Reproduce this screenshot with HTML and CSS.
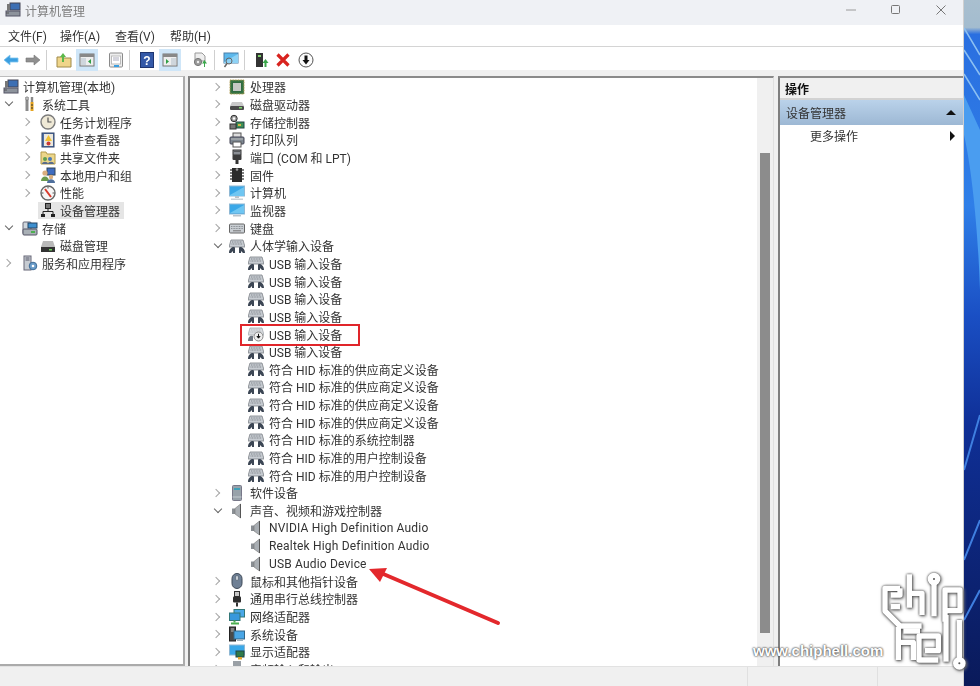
FILE: index.html
```html
<!DOCTYPE html>
<html lang="zh-CN">
<head>
  <meta charset="UTF-8">
  <title>计算机管理</title>
  <link rel="stylesheet" href="styles.css">
</head>
<body>
  <svg class="sprites" aria-hidden="true">
    <symbol id="i-root" viewBox="0 0 16 16"><rect x="5" y="1" width="10" height="7" fill="#3d6fb4" stroke="#445"/><rect x="1" y="9" width="14" height="5" fill="#8d939c" stroke="#556"/><path d="M3 4v5M1 11h3" stroke="#555"/><rect x="2" y="2" width="3" height="6" fill="#777"/></symbol>
    <symbol id="i-tools" viewBox="0 0 16 16"><path d="M5 1v14" stroke="#8a8a8a" stroke-width="3"/><path d="M4 1h2v3h-2z" fill="#ddd" stroke="#666" stroke-width=".6"/><path d="M10 1v5" stroke="#888" stroke-width="2.4"/><path d="M10 6v9" stroke="#e6a41e" stroke-width="3"/><path d="M9 9h2M9 12h2" stroke="#333"/></symbol>
    <symbol id="i-clock" viewBox="0 0 16 16"><circle cx="8" cy="8" r="7" fill="#efe9d6" stroke="#7c7c7c" stroke-width="1.4"/><path d="M8 3.5V8h3.5" fill="none" stroke="#555" stroke-width="1.2"/></symbol>
    <symbol id="i-event" viewBox="0 0 16 16"><rect x="2" y="1" width="12" height="14" fill="#4e6fa8" stroke="#33466a"/><rect x="4" y="2" width="9" height="12" fill="#ece8dc"/><path d="M8.5 3 12 9H5z" fill="#f1c232"/><circle cx="8.5" cy="11.5" r="2" fill="#c93a34"/></symbol>
    <symbol id="i-share" viewBox="0 0 16 16"><path d="M1 3h5l1 2h8v10H1z" fill="#ecd68a" stroke="#b39a4a"/><circle cx="5" cy="10" r="2" fill="#5f9d4e"/><circle cx="10" cy="10" r="2" fill="#4a78b8"/><path d="M2 15c0-3 6-3 6 0zM8 15c0-3 6-3 6 0z" fill="#596c8a"/></symbol>
    <symbol id="i-users" viewBox="0 0 16 16"><rect x="7" y="1" width="8" height="7" fill="#3f6cc0" stroke="#345"/><circle cx="5" cy="6" r="2.6" fill="#d9ae7e"/><path d="M1 14c0-6 8-6 8 0z" fill="#6b9a4d"/><circle cx="11" cy="10" r="2.2" fill="#d9ae7e"/><path d="M7 16c0-5 8-5 8 0z" fill="#4f6f9c"/></symbol>
    <symbol id="i-perf" viewBox="0 0 16 16"><circle cx="8" cy="8" r="7" fill="#f6f6f6" stroke="#666" stroke-width="1.4"/><path d="M5 4l6 8" stroke="#d83a2c" stroke-width="2"/><path d="M8 1.5v2M14.5 8h-2M1.5 8h2" stroke="#555"/></symbol>
    <symbol id="i-dev" viewBox="0 0 16 16"><rect x="5.5" y="1.5" width="5" height="5" fill="#777" stroke="#222"/><path d="M8 6.5v3M3 12V9.500h10V12" fill="none" stroke="#222"/><rect x="1" y="12" width="4" height="3" fill="#222"/><rect x="11" y="12" width="4" height="3" fill="#222"/></symbol>
    <symbol id="i-storage" viewBox="0 0 16 16"><rect x="1" y="2" width="8" height="12" rx="1" fill="#cfd6dc" stroke="#667"/><rect x="6" y="3" width="9" height="5" fill="#3d8fcf" stroke="#246"/><rect x="1" y="9" width="14" height="6" rx="1" fill="#a9b0b6" stroke="#556"/><rect x="9" y="11" width="4" height="2" fill="#4caf50"/></symbol>
    <symbol id="i-disk" viewBox="0 0 16 16"><path d="M3 3h10l2 6H1z" fill="#b9b9b9"/><rect x="1" y="9" width="14" height="5" fill="#333"/><rect x="9" y="11" width="3" height="1.500" fill="#6fcf5f"/></symbol>
    <symbol id="i-serv" viewBox="0 0 16 16"><rect x="2" y="1" width="7" height="14" fill="#c7ccd2" stroke="#667"/><path d="M3.500 3h4M3.500 5h4" stroke="#556"/><circle cx="11" cy="11" r="3.800" fill="#6a9cc9" stroke="#3d6b96"/><circle cx="11" cy="11" r="1.300" fill="#fff"/></symbol>
    <symbol id="i-cpu" viewBox="0 0 16 16"><rect x="1" y="1" width="14" height="14" fill="#3d7a4a" stroke="#b09a50" stroke-dasharray="1 .6"/><rect x="2.500" y="2.500" width="11" height="11" fill="#2f6a3f"/><rect x="4" y="4" width="8" height="8" fill="#c4c8c4"/></symbol>
    <symbol id="i-hdd" viewBox="0 0 16 16"><path d="M3 6h10l2 4H1z" fill="#c9c9c9"/><rect x="1" y="10" width="14" height="4" rx="1" fill="#4a4a4a"/><rect x="10" y="11" width="3" height="1.500" fill="#7ed36b"/></symbol>
    <symbol id="i-storctl" viewBox="0 0 16 16"><circle cx="5" cy="4.500" r="3.200" fill="#9a9a9a" stroke="#333"/><circle cx="5" cy="4.500" r="1.200" fill="#fff"/><rect x="7" y="8" width="8" height="6" fill="#3c8f56" stroke="#244"/><rect x="1" y="10" width="6" height="5" fill="#777" stroke="#333"/><rect x="9" y="10" width="3" height="2" fill="#d5b54a"/></symbol>
    <symbol id="i-print" viewBox="0 0 16 16"><rect x="4" y="1" width="8" height="5" fill="#ddd" stroke="#555"/><rect x="1" y="5" width="14" height="7" rx="1" fill="#7d8790" stroke="#445"/><rect x="4" y="10" width="8" height="5" fill="#fff" stroke="#555"/><path d="M2 7h12" stroke="#bbb"/></symbol>
    <symbol id="i-port" viewBox="0 0 16 16"><rect x="4" y="1" width="8" height="5" fill="#8b8f95" stroke="#333"/><path d="M5.500 2.500h1M7.500 2.500h1M9.500 2.500h1" stroke="#222"/><rect x="3.500" y="6" width="9" height="5" rx="1" fill="#3b3b3b"/><rect x="6.500" y="11" width="3" height="4" fill="#333"/></symbol>
    <symbol id="i-firm" viewBox="0 0 16 16"><rect x="3" y="1" width="10" height="14" fill="#2b2b2b"/><path d="M1 3h2M1 6h2M1 9h2M1 12h2M13 3h2M13 6h2M13 9h2M13 12h2" stroke="#555" stroke-width="1.400"/><circle cx="8" cy="2.500" r="1.300" fill="#999"/></symbol>
    <symbol id="i-pc" viewBox="0 0 16 16"><rect x="0.500" y="1" width="15" height="10" fill="#3aa8e8" stroke="#8fb8d4"/><path d="M1 10 15 2v9H1z" fill="#6fc6f2"/><path d="M6 11v2h4v-2" fill="#b9c3cb"/><rect x="2" y="13.500" width="12" height="1.500" fill="#c9d2d8"/></symbol>
    <symbol id="i-mon" viewBox="0 0 16 16"><rect x="0.500" y="2" width="15" height="10" fill="#3aa8e8" stroke="#8fb8d4"/><path d="M1 11 15 3v8H1z" fill="#6fc6f2"/><rect x="4" y="13" width="8" height="1.500" fill="#b9c3cb"/></symbol>
    <symbol id="i-kbd" viewBox="0 0 16 16"><rect x="0.500" y="4" width="15" height="9" rx="1" fill="#c9ced3" stroke="#666"/><path d="M2 6.500h12M2 8.500h12" stroke="#8a8f94" stroke-dasharray="1 .6"/><path d="M4 10.800h8" stroke="#777"/></symbol>
    <symbol id="i-hid" viewBox="0 0 16 16"><path d="M2 2h12l2 7H0z" fill="#c7ccd2" stroke="#7b8087" stroke-width=".8"/><path d="M3 4h10M2.500 6h11" stroke="#7f848a" stroke-dasharray="1 .6"/><path d="M0 15c0-6 6-7 6-5v5H4v-2l-2 2zM16 15c0-6-6-7-6-5v5h2v-2l2 2z" fill="#3c4654"/></symbol>
    <symbol id="i-hidoff" viewBox="0 0 16 16"><path d="M2 2h12l2 7H0z" fill="#d9dce0" stroke="#a5a9ae" stroke-width=".8"/><path d="M3 4h10M2.500 6h11" stroke="#b5b9bd" stroke-dasharray="1 .6"/><path d="M0 15c0-5 3-6 5-5v5H2z" fill="#6d7580"/><circle cx="10.500" cy="10.500" r="4.500" fill="#eee" stroke="#888"/><path d="M10.500 7.800v3.400M8.800 10l1.700 2.200 1.700-2.200" fill="#111" stroke="#111"/></symbol>
    <symbol id="i-soft" viewBox="0 0 16 16"><rect x="3.500" y="0.500" width="9" height="15" rx="1" fill="#98a2aa" stroke="#778"/><rect x="5" y="3" width="6" height="2" fill="#3fa0b8"/><path d="M3.500 12h9" stroke="#c4cbd0"/></symbol>
    <symbol id="i-spk" viewBox="0 0 16 16"><path d="M3 5.500h3V11H3z" fill="#8a8f94"/><path d="M6 5.500 11.500 1v14L6 11z" fill="#a9aeb3" stroke="#777" stroke-width=".6"/><path d="M11.500 1v14" stroke="#555"/></symbol>
    <symbol id="i-mouse" viewBox="0 0 16 16"><rect x="3" y="0.500" width="10" height="15" rx="5" fill="#6f8095" stroke="#3f4a58"/><rect x="6.500" y="2.500" width="3" height="5" rx="1.500" fill="#c7ced6" stroke="#3f4a58" stroke-width=".5"/></symbol>
    <symbol id="i-usb" viewBox="0 0 16 16"><rect x="5.500" y="0.500" width="5" height="5" fill="#c9c9c9" stroke="#333"/><rect x="4" y="5.500" width="8" height="6" rx="1" fill="#2f2f2f"/><path d="M8 11.500V15.500" stroke="#333" stroke-width="2"/></symbol>
    <symbol id="i-net" viewBox="0 0 16 16"><rect x="5" y="0.500" width="10.500" height="7.500" fill="#4aa8e8" stroke="#377"/><rect x="0.500" y="4" width="10.500" height="7.500" fill="#3898dc" stroke="#377"/><path d="M5.500 11.500v2" stroke="#4caf50" stroke-width="2"/><rect x="2" y="13.500" width="8" height="2" fill="#4caf50"/></symbol>
    <symbol id="i-sys" viewBox="0 0 16 16"><rect x="0.500" y="1" width="6" height="14" fill="#4a4a4a" stroke="#222"/><path d="M2 3h3M2 5h3" stroke="#bbb"/><rect x="5" y="5" width="10.500" height="8" fill="#49a6e6" stroke="#368"/><rect x="8" y="13.500" width="6" height="1.500" fill="#9fb0bb"/></symbol>
    <symbol id="i-disp" viewBox="0 0 16 16"><rect x="0.500" y="1" width="15" height="10" fill="#3aa8e8" stroke="#8fb8d4"/><rect x="7" y="7" width="8" height="6" fill="#2f7a4a" stroke="#244"/><rect x="9" y="13" width="4" height="2.500" fill="#e3a42a"/></symbol>
    <symbol id="i-aud" viewBox="0 0 16 16"><path d="M4 0h8v16H4z" fill="#9aa0a6"/></symbol>
  </svg>

  <div class="desktop">
    <div class="window">
      <div class="titlebar">
        <svg class="icon"><use href="#i-root"/></svg>
        <span class="title">计算机管理</span>
        <div class="winbtns">
          <svg class="winbtn" viewBox="0 0 10 10"><path d="M0 5h10" stroke="#9a9a9a"/></svg>
          <svg class="winbtn" viewBox="0 0 10 10"><rect x=".5" y=".5" width="8" height="8" rx="1" fill="none" stroke="#777"/></svg>
          <svg class="winbtn" viewBox="0 0 10 10"><path d="M.5.500l9 9M9.500.500l-9 9" stroke="#777"/></svg>
        </div>
      </div>

      <div class="menubar">
        <span class="m1">文件(F)</span>
        <span class="m2">操作(A)</span>
        <span class="m3">查看(V)</span>
        <span class="m4">帮助(H)</span>
      </div>

      <div class="toolbar">
        <svg class="tool" viewBox="0 0 16 16"><path d="M1 8l6-5v3h8v4H7v3z" fill="#3a9ee0" stroke="#7cc4ef" stroke-width=".8"/></svg>
        <svg class="tool" viewBox="0 0 16 16"><path d="M15 8 9 3v3H1v4h8v3z" fill="#8f8f8f" stroke="#777" stroke-width=".6"/></svg>
        <i class="sep"></i>
        <svg class="tool" viewBox="0 0 16 16"><path d="M1 5h5l1 1h8v9H1z" fill="#efd58a" stroke="#a08a4a"/><path d="M6 10V5H4l3-4 3 4H8v5z" fill="#5cb84a"/></svg>
        <svg class="tool on" viewBox="0 0 16 16"><rect x="1" y="2" width="14" height="12" fill="#eee" stroke="#777"/><rect x="1" y="2" width="14" height="3" fill="#888"/><rect x="2" y="6" width="5" height="7" fill="#cfd6dc"/><path d="M12 7v5L9 9.500z" fill="#2f9e44"/></svg>
        <svg class="tool gap7" viewBox="0 0 16 16"><rect x="1.500" y="1" width="13" height="14" rx="1" fill="#eee" stroke="#8a8a8a"/><rect x="3.500" y="4" width="9" height="8" fill="#fff" stroke="#bbb"/><path d="M5 6h6M5 8h6" stroke="#aab"/><path d="M6 14h5" stroke="#3a9ee0" stroke-width="2"/></svg>
        <i class="sep"></i>
        <svg class="tool" viewBox="0 0 16 16"><rect x="1.500" y="0.500" width="13" height="15" fill="#3459a8" stroke="#1f3570"/><text x="8" y="13" class="help-q">?</text></svg>
        <svg class="tool on" viewBox="0 0 16 16"><rect x="1" y="2" width="14" height="12" fill="#eee" stroke="#777"/><rect x="1" y="2" width="14" height="3" fill="#888"/><rect x="9" y="6" width="5" height="7" fill="#cfd6dc"/><path d="M4 7v5l3-2.500z" fill="#2f9e44"/></svg>
        <svg class="tool gap8" viewBox="0 0 16 16"><path d="M3 1h7l3 3v5H3z" fill="#eee" stroke="#999"/><circle cx="6" cy="10" r="3.600" fill="#9a9a9a" stroke="#777"/><circle cx="6" cy="10" r="1.200" fill="#eee"/><path d="M12 15v-3.500h-2L12.500 8l2.500 3.500h-2V15z" fill="#3aa64a"/></svg>
        <i class="sep sep-b"></i>
        <svg class="tool" viewBox="0 0 16 16"><rect x="1" y="1" width="14" height="10" fill="#5cb8ec" stroke="#4a7fa8"/><path d="M1 10 15 2v9H1z" fill="#8ed2f5"/><circle cx="6" cy="9" r="3" fill="none" stroke="#666"/><path d="M4 11.500 1.500 15" stroke="#666" stroke-width="1.500"/></svg>
        <i class="sep sep-c"></i>
        <svg class="tool" viewBox="0 0 16 16"><rect x="3" y="1" width="7" height="14" fill="#333"/><rect x="5" y="3" width="3" height="2" fill="#7ed36b"/><path d="M11.500 15v-4H9.500L12.500 7l3 4h-2v4z" fill="#3aa64a"/></svg>
        <svg class="tool" viewBox="0 0 16 16"><path d="M2.500 2.500l11 11M13.500 2.500l-11 11" stroke="#d8231f" stroke-width="3.200"/></svg>
        <svg class="tool gap1" viewBox="0 0 16 16"><circle cx="8" cy="8" r="7" fill="#fbfbfb" stroke="#555"/><path d="M6.500 3.500h3V8h2L8 12.500 4.500 8h2z" fill="#111"/></svg>
      </div>

      <div class="panes">
        <div class="pane left">
          <div class="row root"><svg class="icon"><use href="#i-root"/></svg><span>计算机管理(本地)</span></div>
          <div class="row l1"><i class="chev down"></i><svg class="icon"><use href="#i-tools"/></svg><span>系统工具</span></div>
          <div class="row l2"><i class="chev"></i><svg class="icon"><use href="#i-clock"/></svg><span>任务计划程序</span></div>
          <div class="row l2"><i class="chev"></i><svg class="icon"><use href="#i-event"/></svg><span>事件查看器</span></div>
          <div class="row l2"><i class="chev"></i><svg class="icon"><use href="#i-share"/></svg><span>共享文件夹</span></div>
          <div class="row l2"><i class="chev"></i><svg class="icon"><use href="#i-users"/></svg><span>本地用户和组</span></div>
          <div class="row l2"><i class="chev"></i><svg class="icon"><use href="#i-perf"/></svg><span>性能</span></div>
          <div class="row l2"><i class="chev none"></i><div class="selected"><svg class="icon"><use href="#i-dev"/></svg><span>设备管理器</span></div></div>
          <div class="row l1"><i class="chev down"></i><svg class="icon"><use href="#i-storage"/></svg><span>存储</span></div>
          <div class="row l2"><i class="chev none"></i><svg class="icon"><use href="#i-disk"/></svg><span>磁盘管理</span></div>
          <div class="row l1"><i class="chev"></i><svg class="icon"><use href="#i-serv"/></svg><span>服务和应用程序</span></div>
        </div>

        <div class="pane center">
          <div class="tree">
            <div class="row c1"><i class="chev"></i><svg class="icon"><use href="#i-cpu"/></svg><span>处理器</span></div>
            <div class="row c1"><i class="chev"></i><svg class="icon"><use href="#i-hdd"/></svg><span>磁盘驱动器</span></div>
            <div class="row c1"><i class="chev"></i><svg class="icon"><use href="#i-storctl"/></svg><span>存储控制器</span></div>
            <div class="row c1"><i class="chev"></i><svg class="icon"><use href="#i-print"/></svg><span>打印队列</span></div>
            <div class="row c1"><i class="chev"></i><svg class="icon"><use href="#i-port"/></svg><span>端口 (COM 和 LPT)</span></div>
            <div class="row c1"><i class="chev"></i><svg class="icon"><use href="#i-firm"/></svg><span>固件</span></div>
            <div class="row c1"><i class="chev"></i><svg class="icon"><use href="#i-pc"/></svg><span>计算机</span></div>
            <div class="row c1"><i class="chev"></i><svg class="icon"><use href="#i-mon"/></svg><span>监视器</span></div>
            <div class="row c1"><i class="chev"></i><svg class="icon"><use href="#i-kbd"/></svg><span>键盘</span></div>
            <div class="row c1"><i class="chev down"></i><svg class="icon"><use href="#i-hid"/></svg><span>人体学输入设备</span></div>
            <div class="row c2"><svg class="icon"><use href="#i-hid"/></svg><span>USB 输入设备</span></div>
            <div class="row c2"><svg class="icon"><use href="#i-hid"/></svg><span>USB 输入设备</span></div>
            <div class="row c2"><svg class="icon"><use href="#i-hid"/></svg><span>USB 输入设备</span></div>
            <div class="row c2"><svg class="icon"><use href="#i-hid"/></svg><span>USB 输入设备</span></div>
            <div class="row c2"><svg class="icon"><use href="#i-hidoff"/></svg><span>USB 输入设备</span></div>
            <div class="row c2"><svg class="icon"><use href="#i-hid"/></svg><span>USB 输入设备</span></div>
            <div class="row c2"><svg class="icon"><use href="#i-hid"/></svg><span>符合 HID 标准的供应商定义设备</span></div>
            <div class="row c2"><svg class="icon"><use href="#i-hid"/></svg><span>符合 HID 标准的供应商定义设备</span></div>
            <div class="row c2"><svg class="icon"><use href="#i-hid"/></svg><span>符合 HID 标准的供应商定义设备</span></div>
            <div class="row c2"><svg class="icon"><use href="#i-hid"/></svg><span>符合 HID 标准的供应商定义设备</span></div>
            <div class="row c2"><svg class="icon"><use href="#i-hid"/></svg><span>符合 HID 标准的系统控制器</span></div>
            <div class="row c2"><svg class="icon"><use href="#i-hid"/></svg><span>符合 HID 标准的用户控制设备</span></div>
            <div class="row c2"><svg class="icon"><use href="#i-hid"/></svg><span>符合 HID 标准的用户控制设备</span></div>
            <div class="row c1"><i class="chev"></i><svg class="icon"><use href="#i-soft"/></svg><span>软件设备</span></div>
            <div class="row c1"><i class="chev down"></i><svg class="icon"><use href="#i-spk"/></svg><span>声音、视频和游戏控制器</span></div>
            <div class="row c2"><svg class="icon"><use href="#i-spk"/></svg><span class="en">NVIDIA High Definition Audio</span></div>
            <div class="row c2"><svg class="icon"><use href="#i-spk"/></svg><span class="en">Realtek High Definition Audio</span></div>
            <div class="row c2"><svg class="icon"><use href="#i-spk"/></svg><span class="en">USB Audio Device</span></div>
            <div class="row c1"><i class="chev"></i><svg class="icon"><use href="#i-mouse"/></svg><span>鼠标和其他指针设备</span></div>
            <div class="row c1"><i class="chev"></i><svg class="icon"><use href="#i-usb"/></svg><span>通用串行总线控制器</span></div>
            <div class="row c1"><i class="chev"></i><svg class="icon"><use href="#i-net"/></svg><span>网络适配器</span></div>
            <div class="row c1"><i class="chev"></i><svg class="icon"><use href="#i-sys"/></svg><span>系统设备</span></div>
            <div class="row c1"><i class="chev"></i><svg class="icon"><use href="#i-disp"/></svg><span>显示适配器</span></div>
            <div class="row c1"><i class="chev"></i><svg class="icon"><use href="#i-aud"/></svg><span>音频输入和输出</span></div>
          </div>
          <div class="scrollbar"><div class="thumb"></div></div>
        </div>

        <div class="pane actions">
          <div class="act-head">操作</div>
          <div class="act-title"><span>设备管理器</span><i class="tri-up"></i></div>
          <div class="act-item"><span>更多操作</span><i class="tri-right"></i></div>
        </div>
      </div>

      <div class="statusbar">
        <div class="st-main"></div>
        <div class="st-mid"></div>
        <div class="st-end"></div>
      </div>
    </div>

    <svg class="wallpaper" viewBox="0 0 16 686" preserveAspectRatio="none">
      <defs>
        <linearGradient id="wall" x1="0" y1="0" x2="0" y2="1">
          <stop offset="0" stop-color="#a9bfcf"/>
          <stop offset=".04" stop-color="#a3bccf"/>
          <stop offset=".05" stop-color="#2a6fe0"/>
          <stop offset=".3" stop-color="#2f7fe8"/>
          <stop offset=".46" stop-color="#1a4fc4"/>
          <stop offset=".62" stop-color="#0f2f96"/>
          <stop offset="1" stop-color="#0a1a5a"/>
        </linearGradient>
      </defs>
      <rect width="16" height="686" fill="url(#wall)"/>
      <path d="M0 135C8 170 14 230 16 290V130L0 95z" fill="#4a9df0"/>
      <path d="M0 28 16 55M0 50 16 75M0 74 16 100" stroke="#8cc0f2" stroke-width="1.500" fill="none"/>
      <path d="M0 470 16 415M0 560 16 520M0 620 16 590" stroke="#3f7fe0" stroke-width="2" fill="none"/>
    </svg>

    <svg class="red-box" viewBox="0 0 120 22"><rect x="1" y="1" width="118" height="20" fill="none" stroke="#e0252a" stroke-width="2"/></svg>
    <svg class="red-arrow" viewBox="0 0 140 70"><path d="M129 57 12 7" stroke="#e3282c" stroke-width="4" stroke-linecap="round"/><path d="M0 3 18 2 11 16z" fill="#e3282c"/></svg>

    <svg class="logo" viewBox="0 0 330 363">
      <g fill="none" stroke="#fff" stroke-width="16" stroke-linejoin="round">
        <path d="M90 70H45v68l45 45h65"/>
        <path d="M62 125h28M62 90h28V70"/>
        <path d="M118 28v100M118 85h38v65"/>
        <circle cx="192" cy="42" r="11"/>
        <path d="M192 54v100"/>
        <path d="M225 170V75h45v62h-45"/>
        <path d="M85 185v100M85 232h45v53M100 198h50"/>
        <path d="M205 285h-58v-72h58v44h-40"/>
        <path d="M228 150v140"/>
        <path d="M268 165v118"/>
        <circle cx="268" cy="295" r="11"/>
      </g>
    </svg>
    <div class="site">www.chiphell.com</div>
  </div>
</body>
</html>
```

FILE: styles.css
```css
* {
  box-sizing: border-box;
}
html, body {
  margin: 0;
  height: 100%;
  overflow: hidden;
}
body {
  background: #fff;
  color: #222;
  font-family: Roboto, "Noto Sans CJK SC", sans-serif;
  font-size: 12px;
}
.sprites {
  display: none;
}
.desktop {
  position: relative;
  display: flex;
  width: 980px;
  height: 686px;
}
.window {
  width: 964px;
  height: 686px;
  background: #f0f0f0;
  display: flex;
  flex-direction: column;
  border-right: 1px solid #d0d0d0;
  filter: blur(0.45px);
}
.wallpaper {
  width: 16px;
  height: 686px;
}
.icon {
  width: 16px;
  height: 16px;
  flex: none;
}

.titlebar {
  height: 25px;
  background: #eff1f5;
  display: flex;
  align-items: center;
  padding: 0 0 5px 5px;
}
.title {
  margin-left: 4px;
  color: #7d7d7d;
}
.winbtns {
  margin-left: auto;
  margin-right: 17px;
  display: flex;
  gap: 35px;
}
.winbtn {
  width: 10px;
  height: 10px;
}

.menubar {
  height: 22px;
  background: #fff;
  border-bottom: 1px solid #d4d4d4;
  display: flex;
  align-items: center;
  color: #333;
  padding-left: 8px;
}
.menubar span {
  width: 55px;
}
.menubar .m1 {
  width: 52px;
}

.toolbar {
  height: 23px;
  background: #fff;
  display: flex;
  align-items: center;
  padding-top: 2px;
}
.tool {
  width: 22px;
  height: 22px;
  padding: 3px;
  flex: none;
}
.tool.on {
  background: #cfe6f8;
  margin-left: 1px;
}
.tool.gap1 {
  margin-left: 1px;
}
.tool.gap7 {
  margin-left: 7px;
}
.tool.gap8 {
  margin-left: 8px;
}
.help-q {
  fill: #fff;
  font-size: 12px;
  font-weight: bold;
  text-anchor: middle;
  font-family: "Liberation Sans", sans-serif;
}
.sep {
  width: 1px;
  height: 20px;
  background: #cfcfcf;
  margin: 0 6px 0 2px;
  flex: none;
}
.sep-b {
  margin: 0 5px 0 3px;
}
.sep-c {
  margin: 0 5px 0 2px;
}

.panes {
  margin-top: 6px;
  height: 590px;
  display: flex;
  flex: none;
}
.pane {
  background: #fff;
  overflow: hidden;
  flex: none;
}
.left {
  width: 185px;
  padding-top: 1px;
  border-top: 1px solid #bdbdbd;
  border-right: 2px solid #ababab;
  border-bottom: 2px solid #ababab;
}
.center {
  width: 586px;
  margin-left: 3px;
  display: flex;
  border-top: 2px solid #8a8a8a;
  border-left: 2px solid #7f7f7f;
  border-right: 1px solid #e0e0e0;
}
.tree {
  flex: 1;
  overflow: hidden;
}
.scrollbar {
  width: 16px;
  background: #f0f0f0;
  padding: 75px 3px 0;
}
.thumb {
  height: 480px;
  background: #8c8c8c;
}

.row {
  height: 17.66px;
  display: flex;
  align-items: center;
  white-space: nowrap;
  color: #333;
}
.row .icon {
  margin-right: 4px;
}
.en {
  letter-spacing: 0.18px;
}
.chev {
  width: 8px;
  height: 8px;
  flex: none;
  position: relative;
}
.chev::before {
  content: "";
  position: absolute;
  left: -3px;
  top: 1px;
  width: 5px;
  height: 5px;
  border-top: 1px solid #a6a6a6;
  border-right: 1px solid #a6a6a6;
  transform: rotate(45deg);
}
.chev.down::before {
  left: -1px;
  top: -1px;
  border-color: #666;
  transform: rotate(135deg);
}
.chev.none::before {
  display: none;
}
.root {
  padding-left: 3px;
}
.l1 {
  padding-left: 7px;
}
.l1 .chev {
  margin-right: 7px;
}
.l2 {
  padding-left: 26px;
}
.l2 .chev {
  margin-right: 6px;
}
.selected {
  display: flex;
  align-items: center;
  width: 86px;
  height: 17.66px;
  background: #e5e5e5;
  margin-left: -2px;
  padding-left: 2px;
}
.c1 {
  padding-left: 26px;
}
.c1 .chev {
  margin-right: 5px;
}
.c1 .icon {
  margin-right: 5px;
}
.c2 {
  padding-left: 58px;
}
.c2 .icon {
  margin-right: 5px;
}

.actions {
  width: 185px;
  margin-left: 4px;
  border-top: 2px solid #8a8a8a;
  border-left: 2px solid #7f7f7f;
}
.act-head {
  height: 22px;
  background: #f0f0f0;
  border-bottom: 2px solid #d2d2d2;
  font-weight: bold;
  color: #111;
  padding: 2px 0 0 5px;
}
.act-title {
  height: 25px;
  background: linear-gradient(#bad2ea, #9db8d4);
  display: flex;
  align-items: center;
  justify-content: space-between;
  padding: 0 7px 0 6px;
  color: #333;
}
.act-item {
  height: 21px;
  display: flex;
  align-items: center;
  justify-content: space-between;
  padding: 0 8px 0 30px;
  color: #333;
}
.tri-up {
  width: 0;
  height: 0;
  border-left: 5px solid transparent;
  border-right: 5px solid transparent;
  border-bottom: 5px solid #111;
}
.tri-right {
  width: 0;
  height: 0;
  border-top: 5px solid transparent;
  border-bottom: 5px solid transparent;
  border-left: 5px solid #111;
}

.statusbar {
  height: 20px;
  flex: none;
  display: flex;
  background: #f0f0f0;
  border-top: 1px solid #e2e2e2;
}
.st-main {
  width: 748px;
  border-right: 1px solid #e0e0e0;
}
.st-mid {
  width: 130px;
  border-right: 1px solid #e0e0e0;
}

/* things on top of the screenshot */
.red-box {
  position: absolute;
  left: 240px;
  top: 324px;
  width: 120px;
  height: 22px;
}
.red-arrow {
  position: absolute;
  left: 369px;
  top: 566px;
  width: 140px;
  height: 70px;
}
.logo {
  position: absolute;
  left: 870px;
  top: 565px;
  width: 110px;
  height: 121px;
  filter: drop-shadow(0 0 1px #444) drop-shadow(1px 1px 1.5px #777);
}
.site {
  position: absolute;
  left: 753px;
  top: 642px;
  font-family: "Liberation Sans", sans-serif;
  font-size: 15px;
  font-weight: bold;
  color: #fff;
  text-shadow: 0 0 2px #444, 0 0 2px #444;
}
```
